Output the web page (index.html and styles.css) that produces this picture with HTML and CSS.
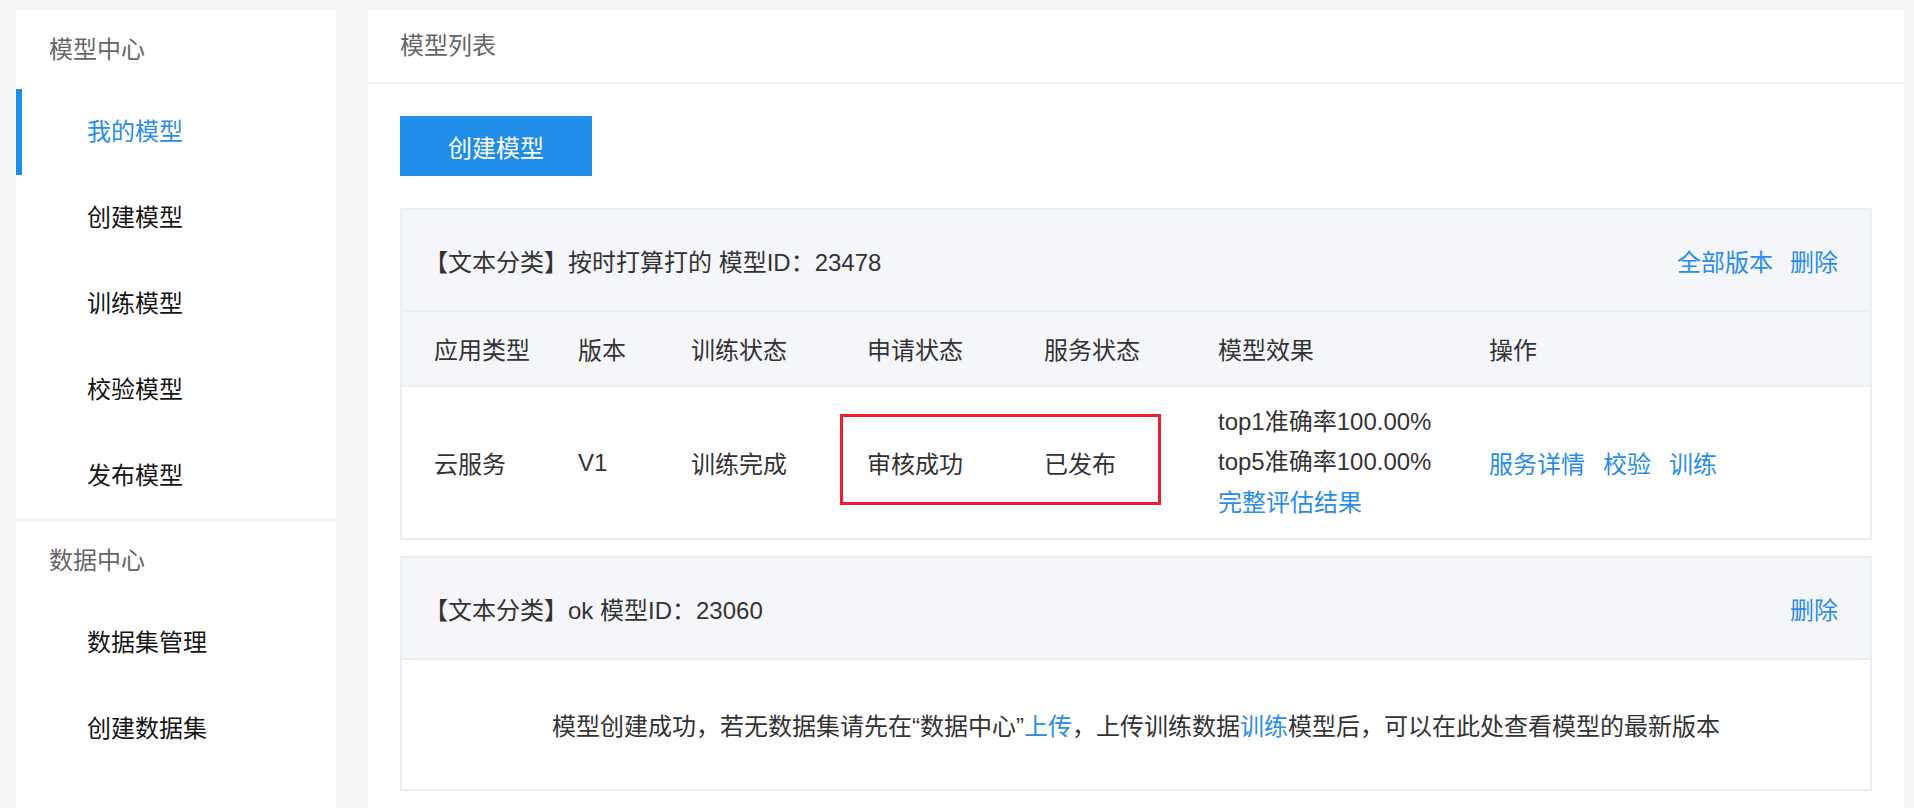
FILE: index.html
```html
<!DOCTYPE html>
<html>
    <head>
        <meta charset="utf-8">
        <title>模型列表</title>
        <meta name="viewport" content="width=device-width, initial-scale=1.0">
        <link rel="stylesheet" href="styles.css">
    </head>
    <body>
        <div class="layout">
            <aside class="sidebar">
                <div class="nav-group">
                    <div class="nav-title">模型中心</div>
                    <a class="nav-item active" href="#">我的模型</a>
                    <a class="nav-item" href="#">创建模型</a>
                    <a class="nav-item" href="#">训练模型</a>
                    <a class="nav-item" href="#">校验模型</a>
                    <a class="nav-item" href="#">发布模型</a>
                </div>
                <div class="nav-group">
                    <div class="nav-title">数据中心</div>
                    <a class="nav-item" href="#">数据集管理</a>
                    <a class="nav-item" href="#">创建数据集</a>
                </div>
            </aside>

            <main class="main">
                <div class="main__head">模型列表</div>
                <div class="main__body">
                    <button class="btn" type="button">创建模型</button>

                    <div class="model-card">
                        <div class="model-card__head">
                            <span class="model-card__title">【文本分类】按时打算打的 模型ID：23478</span>
                            <span class="model-card__ops">
                                <a href="#">全部版本</a><a href="#">删除</a>
                            </span>
                        </div>
                        <div class="model-table__row model-table__row--head">
                            <span>应用类型</span>
                            <span>版本</span>
                            <span>训练状态</span>
                            <span>申请状态</span>
                            <span>服务状态</span>
                            <span>模型效果</span>
                            <span>操作</span>
                        </div>
                        <div class="model-table__row">
                            <span>云服务</span>
                            <span>V1</span>
                            <span>训练完成</span>
                            <span>审核成功</span>
                            <span>已发布</span>
                            <span class="effect">
                                top1准确率100.00%<br>
                                top5准确率100.00%<br>
                                <a href="#">完整评估结果</a>
                            </span>
                            <span class="actions">
                                <a href="#">服务详情</a><a href="#">校验</a><a href="#">训练</a>
                            </span>
                            <!-- highlight box drawn over the two status cells -->
                            <i class="mark"></i>
                        </div>
                    </div>

                    <div class="model-card">
                        <div class="model-card__head">
                            <span class="model-card__title">【文本分类】ok 模型ID：23060</span>
                            <span class="model-card__ops">
                                <a href="#">删除</a>
                            </span>
                        </div>
                        <div class="model-card__empty">
                            模型创建成功，若无数据集请先在“数据中心”<a href="#">上传</a>，上传训练数据<a href="#">训练</a>模型后，可以在此处查看模型的最新版本
                        </div>
                    </div>
                </div>
            </main>
        </div>
    </body>
</html>
```

FILE: styles.css
```css
:root {
    --font-main: "Liberation Sans", "Noto Sans CJK SC", sans-serif;

    --color-bg: #f4f5f7;
    --color-white: #fff;
    --color-text: #333;
    --color-muted: #666;
    --color-nav: #151515;
    --color-blue: #2a8de8;
    --color-btn: #208ee8;
    --color-head: #f5f6fa;
    --color-line: #eceef5;
    --color-mark: #ee1f2c;

    --fz-normal: 24px;
}
* {
    box-sizing: border-box;
}
body {
    margin: 0;
    background: var(--color-bg);
    font-family: var(--font-main);
    font-size: var(--fz-normal);
    color: var(--color-text);
}
a {
    color: var(--color-blue);
    text-decoration: none;
}
.layout {
    display: flex;
    gap: 32px;
    min-height: 100vh;
    padding: 10px 10px 0 16px;
}

/* sidebar */
.sidebar {
    flex: 0 0 320px;
    background: var(--color-white);
}
.nav-group + .nav-group {
    border-top: 2px solid #eef1f8;
}
.nav-title {
    height: 79px;
    line-height: 79px;
    padding-left: 33px;
    color: var(--color-muted);
}
.nav-item {
    display: block;
    height: 86px;
    line-height: 86px;
    padding-left: 71px;
    color: var(--color-nav);
}
.nav-item.active {
    color: var(--color-blue);
    box-shadow: inset 6px 0 0 var(--color-btn);
}

/* main panel */
.main {
    flex: 1;
    background: var(--color-white);
}
.main__head {
    height: 74px;
    line-height: 72px;
    padding-left: 32px;
    color: var(--color-muted);
    border-bottom: 2px solid #eef0f5;
}
.main__body {
    padding: 32px;
}
.btn {
    display: block;
    width: 192px;
    height: 60px;
    margin-bottom: 32px;
    border: 0;
    background: var(--color-btn);
    color: var(--color-white);
    font-family: var(--font-main);
    font-size: var(--fz-normal);
    cursor: pointer;
}

.model-card {
    border: 2px solid var(--color-line);
    margin-bottom: 16px;
}
.model-card__head {
    display: flex;
    align-items: center;
    justify-content: space-between;
    height: 100px;
    padding: 0 32px 0 22px;
    background: var(--color-head);
}
.model-card__ops a + a {
    margin-left: 17px;
}
.model-table__row {
    position: relative;
    display: grid;
    grid-template-columns: 144px 113px 176px 177px 174px 271px 1fr;
    align-items: center;
    height: 153px;
    padding-left: 32px;
    border-top: 2px solid var(--color-line);
    background: var(--color-white);
}
.model-table__row--head {
    height: 75px;
    background: var(--color-head);
}
.effect {
    line-height: 40.5px;
}
.actions a + a {
    margin-left: 18px;
}
.mark {
    position: absolute;
    top: 27px;
    left: 438px;
    width: 321px;
    height: 91px;
    border: 3px solid var(--color-mark);
    pointer-events: none;
}
.model-card__empty {
    display: flex;
    align-items: center;
    justify-content: center;
    height: 131px;
    border-top: 2px solid var(--color-line);
    background: var(--color-white);
}
```
